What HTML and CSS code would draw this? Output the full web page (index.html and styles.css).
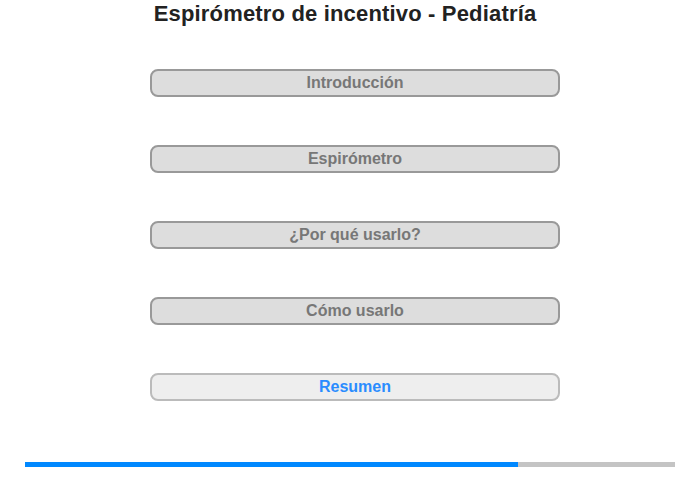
FILE: index.html
```html
<!DOCTYPE html>
<html lang="es">
<head>
<meta charset="utf-8">
<title>Espirómetro de incentivo - Pediatría</title>
<link rel="stylesheet" href="styles.css">
</head>
<body>
<div class="page">
  <h1 class="title">Espirómetro de incentivo - Pediatría</h1>
  <div class="menu">
    <div class="btn">Introducción</div>
    <div class="btn">Espirómetro</div>
    <div class="btn">¿Por qué usarlo?</div>
    <div class="btn">Cómo usarlo</div>
    <div class="btn current">Resumen</div>
  </div>
  <div class="progress"><div class="progress-fill" style="width: 493px"></div></div>
</div>
</body>
</html>
```
FILE: styles.css
```css
html, body {
  margin: 0;
  padding: 0;
  background: #fff;
}
.page {
  width: 700px;
  height: 480px;
  font-family: "Liberation Sans", Arial, sans-serif;
  display: flex;
  flex-direction: column;
  align-items: center;
}
.title {
  margin: 1px 10px 0 0;
  font-size: 22px;
  line-height: 26px;
  font-weight: bold;
  letter-spacing: 0.17px;
  color: #222;
  text-align: center;
}
.menu {
  margin: 42px 0 0 10px;
  display: flex;
  flex-direction: column;
  gap: 48px;
}
.btn {
  box-sizing: border-box;
  width: 410px;
  height: 28px;
  border: 2px solid #999;
  border-radius: 8px;
  background: #ddd;
  color: #777;
  font-size: 16px;
  font-weight: bold;
  line-height: 24px;
  text-align: center;
}
.btn.current {
  background: #eee;
  border-color: #bbb;
  color: #2a8cff;
}
.progress {
  margin-top: 61px;
  width: 650px;
  height: 5px;
  background: #c4c4c4;
  display: flex;
}
.progress-fill {
  height: 100%;
  background: #0088ff;
}
```
